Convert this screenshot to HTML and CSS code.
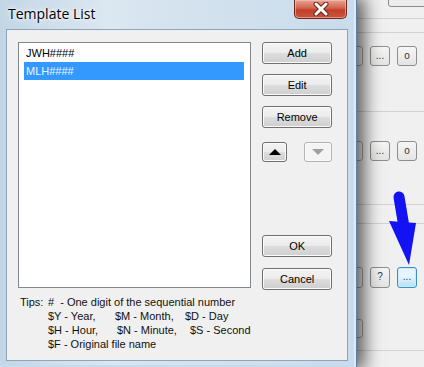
FILE: index.html
```html
<!DOCTYPE html>
<html lang="en">
<head>
    <meta charset="UTF-8">
    <title>Template List</title>
    <link rel="stylesheet" href="styles.css">
</head>
<body>
    <!-- the application window behind the dialog -->
    <div class="app">
        <div class="topbtn"></div>
        <div class="line l1"></div>
        <div class="line l2"></div>
        <div class="row r1">
            <span class="field"></span>
            <span class="sbtn">...</span>
            <span class="sbtn">o</span>
        </div>
        <div class="line l3"></div>
        <div class="row r2">
            <span class="field"></span>
            <span class="sbtn">...</span>
            <span class="sbtn">o</span>
        </div>
        <div class="line l4"></div>
        <div class="line l5"></div>
        <div class="row r3">
            <span class="field"></span>
            <span class="sbtn">?</span>
            <span class="sbtn hot">...</span>
        </div>
        <div class="row r4">
            <span class="field"></span>
        </div>
        <div class="line l6"></div>
    </div>

    <!-- dialog -->
    <div class="window">
        <div class="titlebar">
            <span class="title">Template List</span>
            <a href="javascript:;" class="close">
                <svg width="20" height="14" viewBox="0 0 20 14">
                    <path d="M5 2 L15 12 M15 2 L5 12" stroke="#6b2417" stroke-width="5" stroke-linecap="round"/>
                    <path d="M5 2 L15 12 M15 2 L5 12" stroke="#fff" stroke-width="3" stroke-linecap="round"/>
                </svg>
            </a>
        </div>
        <div class="client">
            <div class="main">
                <ul class="list">
                    <li>JWH####</li>
                    <li class="sel">MLH####</li>
                </ul>
                <div class="btns">
                    <a href="javascript:;" class="btn">Add</a>
                    <a href="javascript:;" class="btn">Edit</a>
                    <a href="javascript:;" class="btn">Remove</a>
                    <div class="moves">
                        <a href="javascript:;" class="btn mv"><span class="up"></span></a>
                        <a href="javascript:;" class="btn mv off"><span class="down"></span></a>
                    </div>
                    <a href="javascript:;" class="btn ok">OK</a>
                    <a href="javascript:;" class="btn">Cancel</a>
                </div>
            </div>
            <div class="tips">
                <span class="tl">Tips:</span>
                <div class="tlines">
                    <div>#&nbsp; - One digit of the sequential number</div>
                    <div><span class="c1">$Y - Year,</span><span class="c2">$M - Month,</span><span>$D - Day</span></div>
                    <div><span class="c3">$H - Hour,</span><span class="c4">$N - Minute,</span><span>$S - Second</span></div>
                    <div>$F - Original file name</div>
                </div>
            </div>
        </div>
    </div>

    <!-- blue pointer -->
    <svg class="pointer" width="40" height="80" viewBox="385 188 40 80">
        <path d="M399 197 L404 227" stroke="#1212f2" stroke-width="11" stroke-linecap="round"/>
        <polygon points="389,221 416,223 409,265" fill="#1212f2"/>
    </svg>
</body>
</html>
```

FILE: styles.css
```css
*{margin: 0;padding: 0;box-sizing: border-box}
body{
    width: 424px;
    height: 367px;
    overflow: hidden;
    position: relative;
    background: #f0f0f0;
    font-family: "Liberation Sans", Arial, sans-serif;
    font-size: 11px;
    color: #000;
}
a{color: inherit;text-decoration: none}

/* background application */
.app{
    display: flex;
    flex-direction: column;
    padding-left: 303px;
}
.topbtn{
    margin: -14px 0 0 85px;
    width: 60px;
    height: 21px;
    border: 1px solid #8a8a8a;
    border-radius: 3px;
    background: #ececec;
}
.line{
    height: 1px;
    background: #d2d2d2;
    margin-right: -10px;
}
.l1{margin-top: 11px}
.l2{margin-top: 13px}
.l3{margin-top: 45px}
.l4{margin-top: 43px}
.l5{margin-top: 18px}
.l6{margin-top: 12px}
.row{
    display: flex;
    gap: 7px;
}
.r1{margin-top: 13px}
.r2{margin-top: 29px}
.r3{margin-top: 43px}
.r4{margin-top: 31px}
.field{
    width: 60px;
    height: 20px;
    border: 1px solid #a8a8a8;
    border-radius: 3px;
    background: #f4f4f4;
}
.r3 .field{height: 21px}
.r4 .field{height: 19px}
.sbtn{
    width: 20px;
    height: 20px;
    border: 1px solid #8e8e8e;
    border-radius: 3px;
    background: linear-gradient(#f6f6f6, #e4e4e4);
    text-align: center;
    line-height: 17px;
    font-size: 10px;
    color: #333;
}
.r3 .sbtn{height: 21px}
.sbtn.hot{
    border-color: #3c8fc6;
    background: linear-gradient(#e6f5fd 45%, #b2e0f8);
    box-shadow: inset 0 0 0 1px #c8ecfd;
}

/* dialog window */
.window{
    position: absolute;
    left: 0;
    top: 0;
    width: 357px;
    height: 367px;
    display: flex;
    flex-direction: column;
    padding: 0 8px 6px 6px;
    background: linear-gradient(90deg, #c3d6e6, #dbe7f1 30%, #d2e1ee 60%, #c9dceb);
    box-shadow: 5px 0 16px 3px rgba(0,0,0,0.6), inset -2px 0 0 #d9ebf8, inset 0 -2px 0 #c4dcee;
    border-right: 1px solid #5d7f9c;
}
.titlebar{
    height: 29px;
    display: flex;
    align-items: flex-start;
}
.title{
    padding: 5px 0 0 2px;
    font-family: "Open Sans", sans-serif;
    font-size: 14px;
    line-height: 18px;
    text-shadow: 0 0 6px #fff, 0 0 3px #fff;
}
.close{
    margin-left: auto;
    margin-right: 1px;
    width: 53px;
    height: 19px;
    border: 1px solid #6e2a1e;
    border-top: none;
    border-radius: 0 0 5px 5px;
    background: linear-gradient(#e7a494, #d4634c 45%, #c2402a 55%, #c9553d);
    display: flex;
    justify-content: center;
    align-items: center;
    box-shadow: inset 0 0 0 1px rgba(255,210,200,0.5);
}
.client{
    flex: 1;
    background: #f0f0f0;
    border: 1px solid #8ea4b8;
    padding: 12px 15px 0 11px;
}
.main{
    display: flex;
    gap: 11px;
}
.list{
    width: 234px;
    height: 246px;
    list-style: none;
    background: #fff;
    border: 1px solid #82878f;
    padding: 1px 6px 0 5px;
}
.list li{
    height: 18px;
    line-height: 18px;
    padding-left: 2px;
}
.list .sel{
    background: #3399ff;
    color: #eaf5ff;
}
.btns{
    width: 70px;
    height: 248px;
    display: flex;
    flex-direction: column;
    gap: 10px;
}
.btn{
    display: block;
    height: 22px;
    line-height: 20px;
    text-align: center;
    border: 1px solid #707070;
    border-radius: 3px;
    background: linear-gradient(#f4f4f4, #ebebeb 48%, #dddddd 52%, #cfcfcf);
    box-shadow: inset 0 0 0 1px #fbfbfb;
}
.moves{
    display: flex;
    justify-content: space-between;
    margin-top: 4px;
}
.btn.mv{
    width: 25px;
    height: 20px;
    display: flex;
    justify-content: center;
    align-items: center;
}
.btn.mv.off{
    width: 28px;
    border-color: #b0b3b6;
    background: #f4f4f4;
}
.up{
    border-left: 6px solid transparent;
    border-right: 6px solid transparent;
    border-bottom: 6px solid #000;
}
.down{
    border-left: 6px solid transparent;
    border-right: 6px solid transparent;
    border-top: 6px solid #a0a0a0;
}
.btn.ok{margin-top: auto;margin-bottom: 1px}

/* tips */
.tips{
    display: flex;
    margin-top: 5px;
    padding-left: 2px;
    line-height: 14px;
    color: #111;
}
.tl{width: 28px}
.c1{display: inline-block;width: 67px}
.c2{display: inline-block;width: 70px}
.c3{display: inline-block;width: 69px}
.c4{display: inline-block;width: 73px}

.pointer{
    position: absolute;
    left: 385px;
    top: 188px;
}
```
